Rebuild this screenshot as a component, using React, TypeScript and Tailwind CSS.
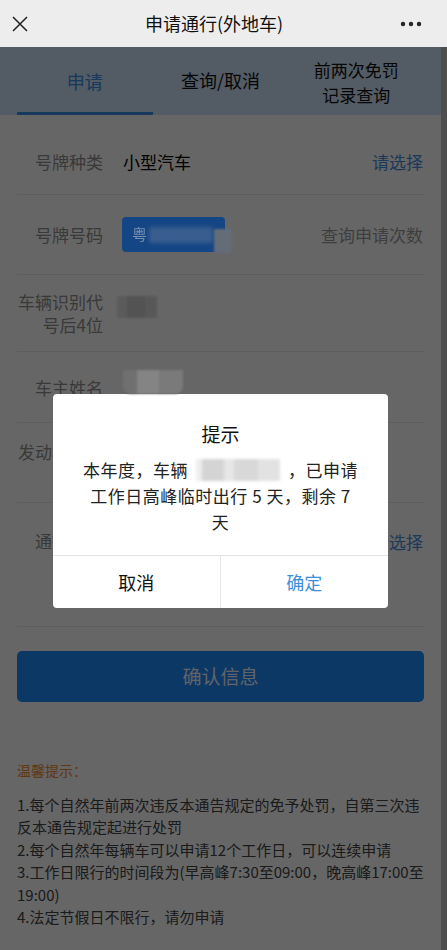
function Row({
  label,
  className,
  children,
  right,
}: {
  label: React.ReactNode;
  className: string;
  children?: React.ReactNode;
  right?: React.ReactNode;
}) {
  return (
    <div className={`flex items-center border-b border-[#ececec] ${className}`}>
      <div className="w-[86px] shrink-0 text-right text-[17px] leading-[23px] text-[#8f8f8f]">{label}</div>
      <div className="ml-[20px] flex flex-1 items-center">{children}</div>
      {right && <div className="pr-[1px] text-[17px]">{right}</div>}
    </div>
  );
}

export default function App() {
  return (
    <div className="flex h-[950px] w-full flex-col overflow-hidden bg-white font-['Noto_Sans_CJK_SC',sans-serif] text-[#333]">
      <header className="flex h-[47px] shrink-0 items-center justify-between bg-[#ededed] px-[12px]">
        <svg width="16" height="16" viewBox="0 0 16 16" className="text-[#222]">
          <path d="M1 1L15 15M15 1L1 15" stroke="currentColor" strokeWidth="1.5" />
        </svg>
        <h1 className="text-[18px] text-[#111]">申请通行(外地车)</h1>
        <svg width="22" height="6" viewBox="0 0 22 6" className="mr-[13px] text-[#222]">
          <circle cx="3" cy="3" r="2.2" fill="currentColor" />
          <circle cx="11" cy="3" r="2.2" fill="currentColor" />
          <circle cx="19" cy="3" r="2.2" fill="currentColor" />
        </svg>
      </header>

      <div className="relative flex flex-1">
        <main className="w-[441px] shrink-0">
          <nav className="grid h-[68px] grid-cols-3 bg-[#d0e3fa] px-[17px]">
            <div className="flex items-center justify-center border-b-[3px] border-[#3a8ee8] pt-[3px] text-[18px] text-[#3a8ee8]">申请</div>
            <div className="flex items-center justify-center pb-[1px] text-[18px] text-[#111]">查询/取消</div>
            <div className="flex flex-col items-center justify-center pt-[2px] text-[17px] leading-[25px] text-[#111]">
              <span>前两次免罚</span>
              <span>记录查询</span>
            </div>
          </nav>

          <div className="px-[17px]">
            <Row label="号牌种类" className="h-[80px] pt-[14px]" right={<span className="text-[#4a90e2]">请选择</span>}>
              <span className="text-[17px] text-black">小型汽车</span>
            </Row>
            <Row label="号牌号码" className="h-[80px]" right={<span className="text-[#9c9c9c]">查询申请次数</span>}>
              <div className="relative z-20 -ml-[1px] flex h-[35px] w-[103px] items-center rounded-[4px] bg-[#144585] pl-[10px]">
                <span className="text-[15px] text-[#7890b0] blur-[0.5px]">粤</span>
                <div className="ml-[2px] h-[16px] w-[64px] bg-[#4a6892] opacity-70 blur-[2px]" />
                <div className="absolute left-[92px] top-[12px] h-[24px] w-[18px] bg-[#646c78] blur-[1px]" />
              </div>
            </Row>
            <Row
              label={
                <>
                  车辆识别代
                  <br />
                  号后4位
                </>
              }
              className="h-[77px]"
            >
              <div className="-ml-[6px] -mt-[12px] flex h-[22px] w-[40px] blur-[1px]">
                <div className="w-[10px] bg-[#e4e4e4]" />
                <div className="w-[18px] bg-[#cfcfcf]" />
                <div className="w-[12px] bg-[#dcdcdc]" />
              </div>
            </Row>
            <Row label="车主姓名" className="h-[71px]">
              <div className="relative z-20 -mt-[10px] flex h-[24px] w-[60px] overflow-hidden rounded-b-[8px] blur-[1px]">
                <div className="w-[14px] bg-[#707070]" />
                <div className="w-[22px] bg-[#848484]" />
                <div className="w-[24px] bg-[#7a7a7a]" />
              </div>
            </Row>
            <Row
              label={
                <>
                  发动机号后
                  <br />
                  4位
                </>
              }
              className="h-[80px]"
            />
            <Row label="通行日期" className="h-[124px] items-start pt-[26px]" right={<span className="text-[#4a90e2]">请选择</span>} />

            <button className="mt-[24px] h-[51px] w-[407px] rounded-[5px] bg-[#1e8cff] text-[19px] text-[#f2f7ff]">确认信息</button>

            <div className="mt-[58px] text-[14px] leading-[20px] text-[#f08a30]">温馨提示：</div>
            <ul className="mt-[14px] whitespace-nowrap text-[15px] leading-[22.4px] text-[#444]">
              <li>
                1.每个自然年前两次违反本通告规定的免予处罚，自第三次违
                <br />
                反本通告规定起进行处罚
              </li>
              <li>2.每个自然年每辆车可以申请12个工作日，可以连续申请</li>
              <li>
                3.工作日限行的时间段为(早高峰7:30至09:00，晚高峰17:00至
                <br />
                19:00)
              </li>
              <li>4.法定节假日不限行，请勿申请</li>
            </ul>
          </div>
        </main>
        <div className="w-[6px] bg-[#c4c4c4]" />

        <div className="absolute inset-0 z-10 flex items-center justify-center bg-black/[0.6] pr-[6px] pt-[5px]">
          <div className="w-[335px] overflow-hidden rounded-[4px] bg-white">
            <div className="pt-[26px] text-center text-[19px] leading-[28px] text-[#111]">提示</div>
            <div className="mt-[9px] px-[20px] pb-[20px] text-center text-[17px] leading-[26px] tracking-[0.5px] text-[#222]">
              <div className="flex items-center justify-center">
                本年度，车辆
                <span className="mx-[8px] flex h-[22px] w-[84px] blur-[1.5px]">
                  <span className="w-[6px] bg-[#eeeeee]" />
                  <span className="w-[22px] bg-[#d4d4d4]" />
                  <span className="w-[10px] bg-[#e6e6e6]" />
                  <span className="w-[24px] bg-[#d8d8d8]" />
                  <span className="w-[22px] bg-[#e2e2e2]" />
                </span>
                ，已申请
              </div>
              <div>工作日高峰临时出行 5 天，剩余 7</div>
              <div>天</div>
            </div>
            <div className="grid h-[53px] grid-cols-2 border-t border-[#e2e2e2] text-[18px]">
              <button className="border-r border-[#e8e8e8] text-[#111]">取消</button>
              <button className="text-[#3b8fd9]">确定</button>
            </div>
          </div>
        </div>
      </div>
    </div>
  );
}
